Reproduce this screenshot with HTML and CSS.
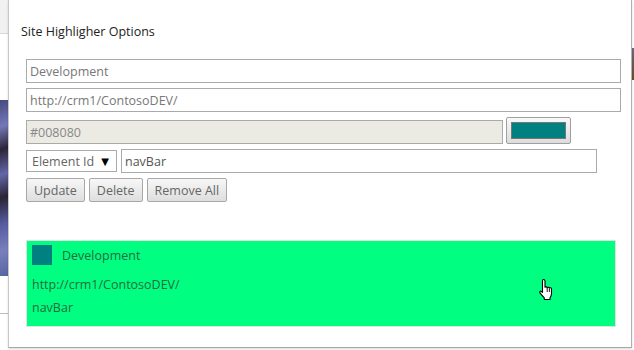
FILE: index.html
```html
<!DOCTYPE html>
<html lang="en">
<head>
  <meta charset="UTF-8">
  <title>Site Highligher Options</title>
  <link rel="stylesheet" href="styles.css">
</head>
<body>
  <div class="page_left">
    <div class="page_bar"></div>
    <div class="page_gap"></div>
    <div class="page_pic"></div>
    <div class="page_gap2"></div>
  </div>

  <div class="dialog">
    <div class="title">Site Highligher Options</div>

    <div class="form">
      <input class="field" type="text" value="Development">
      <input class="field" type="text" value="http://crm1/ContosoDEV/">

      <div class="row color_row">
        <input class="field color_text" type="text" value="#008080" disabled>
        <button class="color_btn"><span class="swatch"></span></button>
      </div>

      <div class="row">
        <div class="select">Element Id <span class="arrow">&#9660;</span></div>
        <input class="field id_text" type="text" value="navBar">
      </div>

      <div class="row buttons">
        <button class="btn">Update</button>
        <button class="btn">Delete</button>
        <button class="btn">Remove All</button>
      </div>
    </div>

    <div class="site">
      <div class="site_head">
        <span class="site_color"></span>
        <span>Development</span>
      </div>
      <div class="site_line">http://crm1/ContosoDEV/</div>
      <div class="site_line">navBar</div>

      <svg class="cursor" width="18" height="22" viewBox="0 0 18 22">
        <path d="M5.5 1.5c.8 0 1.5.6 1.5 1.4v6.4c.3-.6 1.9-.7 2.2.3.4-.6 1.9-.6 2.2.4.5-.5 1.9-.3 2.1.7v4.8c0 1.8-.6 3-1.5 4.3v1.7H6.3v-1.7c-1-1-3-3.3-4.3-5-.7-.9.2-2.1 1.3-1.4l1.2 1V2.9c0-.8.6-1.4 1-1.4z" fill="#fff" stroke="#000" stroke-width="1.1" stroke-linejoin="round"/>
        <path d="M9.2 10v4M11.4 10.4v3.6M13.5 11v3" stroke="#000" stroke-width=".9"/>
      </svg>
    </div>
  </div>

  <div class="page_right">
    <div class="page_pic2"></div>
  </div>
</body>
</html>
```

FILE: styles.css
```css
body{
  margin: 0;
  width: 634px;
  height: 350px;
  overflow: hidden;
  display: flex;
  background-color: #fff;
  font-family: "Open Sans", "DejaVu Sans", sans-serif;
  font-size: 12.5px;
}

.page_left{
  width: 8px;
  flex-shrink: 0;
}

.page_bar{
  height: 33px;
  background-color: #f1f1f1;
  border-bottom: 1px solid #d8d8d8;
}

.page_gap{
  height: 66px;
}

.page_pic{
  height: 176px;
  background: linear-gradient(160deg, #454a80 0%, #7478b8 15%, #2c2538 28%, #6266a8 42%, #2a2334 55%, #565ca0 70%, #7880bc 85%, #5565a2 100%);
}

.page_gap2{
  height: 37px;
  border-bottom: 1px solid #bbb;
}

.dialog{
  position: relative;
  width: 622px;
  height: 347px;
  flex-shrink: 0;
  background-color: #fff;
  border-left: 1px solid #c8c8c8;
  border-right: 1px solid #b0b0b0;
  border-bottom: 1px solid #a8a8a8;
  box-shadow: 0 1px 2px rgba(0,0,0,0.15);
}

.page_right{
  flex: 1;
}

.page_pic2{
  margin-top: 48px;
  height: 32px;
  background: linear-gradient(#6a6a80, #6b4e2a);
}

.title{
  margin: 22px 0 0 12px;
  line-height: 20px;
  color: #222;
}

.form{
  display: flex;
  flex-direction: column;
  gap: 5px;
  margin: 17px 0 0 17px;
}

.field{
  box-sizing: border-box;
  width: 595px;
  height: 24px;
  margin: 0;
  padding: 0 3px;
  border: 1px solid #aaa;
  background-color: #fff;
  font-family: inherit;
  font-size: 12.5px;
  color: #777;
}

.row{
  display: flex;
  align-items: center;
  gap: 3px;
}

.color_row{
  align-items: flex-end;
}

.color_text{
  width: 477px;
  background-color: #ebebe4;
  color: #888;
}

.color_btn{
  box-sizing: border-box;
  width: 65px;
  height: 27px;
  margin: 0;
  padding: 4px;
  border: 1px solid #a0a0a0;
  border-radius: 2px;
  background: linear-gradient(#f8f8f8, #dcdcdc);
}

.swatch{
  display: block;
  height: 100%;
  box-sizing: border-box;
  border: 1px solid #777;
  background-color: #008080;
}

.select{
  box-sizing: border-box;
  width: 91px;
  height: 22px;
  padding: 0 0 0 5px;
  border: 1px solid #aaa;
  display: flex;
  align-items: center;
  justify-content: space-between;
  color: #666;
  margin-right: 1px;
}

.arrow{
  font-size: 10px;
  color: #000;
  margin-right: 7px;
}

.id_text{
  width: 476px;
  color: #555;
}

.buttons{
  gap: 4px;
}

.btn{
  box-sizing: border-box;
  height: 24px;
  margin: 0;
  padding: 0 7px;
  border: 1px solid #a8a8a8;
  border-radius: 2px;
  background: linear-gradient(#f7f7f7, #dedede);
  font-family: inherit;
  font-size: 12.5px;
  color: #666;
}

.site{
  position: relative;
  box-sizing: border-box;
  width: 590px;
  height: 87px;
  margin: 38px 0 0 17px;
  padding: 4px 5px;
  border: 1px solid #e2e2e2;
  background-color: #00ff80;
  color: #236a40;
}

.site_head{
  display: flex;
  align-items: center;
  gap: 10px;
  height: 20px;
}

.site_color{
  width: 20px;
  height: 20px;
  background-color: #008080;
}

.site_line{
  margin-top: 4px;
  line-height: 19px;
}

.site_head + .site_line{
  margin-top: 10px;
}

.cursor{
  position: absolute;
  left: 511px;
  top: 37px;
}
```
